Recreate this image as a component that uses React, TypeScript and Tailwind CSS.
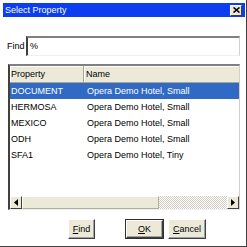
const rows = [
  { code: "DOCUMENT", name: "Opera Demo Hotel, Small" },
  { code: "HERMOSA", name: "Opera Demo Hotel, Small" },
  { code: "MEXICO", name: "Opera Demo Hotel, Small" },
  { code: "ODH", name: "Opera Demo Hotel, Small" },
  { code: "SFA1", name: "Opera Demo Hotel, Tiny" },
];

const font = "font-['Liberation_Sans',Arial,sans-serif] text-[9px] leading-none";

const Btn = ({ label, w, def }: { label: string; w: string; def?: boolean }) => (
  <div className={`${w} h-[20px] ${def ? "border border-[#303030]" : ""}`}>
    <div className="w-full h-full bg-[#ece9d8] border border-t-white border-l-white border-r-[#404040] border-b-[#404040] shadow-[inset_-1px_-1px_0_#a0a0a0] flex items-center justify-center text-black">
      <span>
        <span className="underline">{label[0]}</span>
        {label.slice(1)}
      </span>
    </div>
  </div>
);

const Arrow = ({ dir }: { dir: "left" | "right" }) => (
  <div className="w-[12px] h-full bg-[#ece9d8] border border-t-white border-l-white border-r-[#404040] border-b-[#404040] flex items-center justify-center">
    <svg width="4" height="7" viewBox="0 0 4 7">
      {dir === "left" ? <path d="M4 0 L0 3.5 L4 7 Z" fill="#000" /> : <path d="M0 0 L4 3.5 L0 7 Z" fill="#000" />}
    </svg>
  </div>
);

export default function App() {
  return (
    <div className={`w-[247px] h-[247px] bg-white border-r border-b border-[#404040] ${font}`}>
      <div className="w-full h-full flex flex-col border-l-[3px] border-t-[3px] border-r border-b border-white">
        <div className="h-[14px] bg-[#0a3ef0] flex items-center justify-between pl-[2px] pr-[3px]">
          <span className="text-white">Select Property</span>
          <div className="w-[12px] h-[11px] bg-[#ece9d8] border border-t-white border-l-white border-r-[#404040] border-b-[#404040] flex items-center justify-center">
            <svg width="7" height="6" viewBox="0 0 7 6">
              <path d="M0.5 0.5 L6.5 5.5 M6.5 0.5 L0.5 5.5" stroke="#000" strokeWidth="1.6" />
            </svg>
          </div>
        </div>

        <div className="flex-1 flex flex-col pl-[5px] pr-[5px]">
          <div className="mt-[19px] flex items-center">
            <span className="w-[18px] text-black -ml-[1px] mr-[1px]">Find</span>
            <div className="flex-1 h-[20px] border-t-2 border-l-2 border-t-[#808080] border-l-[#404040] border-r border-b border-r-[#d4d0c8] border-b-[#f0f0f0] bg-white flex items-center pl-[2px]">
              <span className="text-black">%</span>
            </div>
          </div>

          <div className="mt-[8px] h-[146px] flex flex-col border-t-2 border-l-2 border-t-[#808080] border-l-[#404040] border-r border-b border-r-[#d4d0c8] border-b-[#f0f0f0]">
            <div className="h-[17px] flex bg-[#ece9d8] border-b border-[#a8a594] text-black">
              <div className="w-[74px] flex items-center pl-[1px] border-r border-[#a8a594] shadow-[inset_1px_1px_0_#ffffff]">
                Property
              </div>
              <div className="flex-1 flex items-center pl-[2px] shadow-[inset_1px_1px_0_#ffffff]">Name</div>
            </div>
            <div className="flex-1 flex flex-col">
              {rows.map((r, i) => (
                <div
                  key={r.code}
                  className={`h-[16px] flex items-center ${i === 0 ? "bg-[#316ac5] text-white" : "text-black"}`}
                >
                  <span className="w-[75px] pl-[1px]">{r.code}</span>
                  <span className="pl-[2px]">{r.name}</span>
                </div>
              ))}
            </div>
            <div className="h-[13px] flex">
              <Arrow dir="left" />
              <div className="w-[137px] h-full bg-[#ece9d8] border border-t-white border-l-white border-r-[#b0ad9c] border-b-[#b0ad9c]" />
              <div className="flex-1 h-full bg-[repeating-conic-gradient(#d4d0c8_0%_25%,#ffffff_0%_50%)] bg-[length:2px_2px]" />
              <Arrow dir="right" />
            </div>
          </div>

          <div className="mt-[9px] flex pl-[60px]">
            <Btn label="Find" w="w-[27px]" />
            <div className="ml-[30px]">
              <Btn label="OK" w="w-[39px]" def />
            </div>
            <div className="ml-[4px]">
              <Btn label="Cancel" w="w-[38px]" />
            </div>
          </div>
        </div>
      </div>
    </div>
  );
}
